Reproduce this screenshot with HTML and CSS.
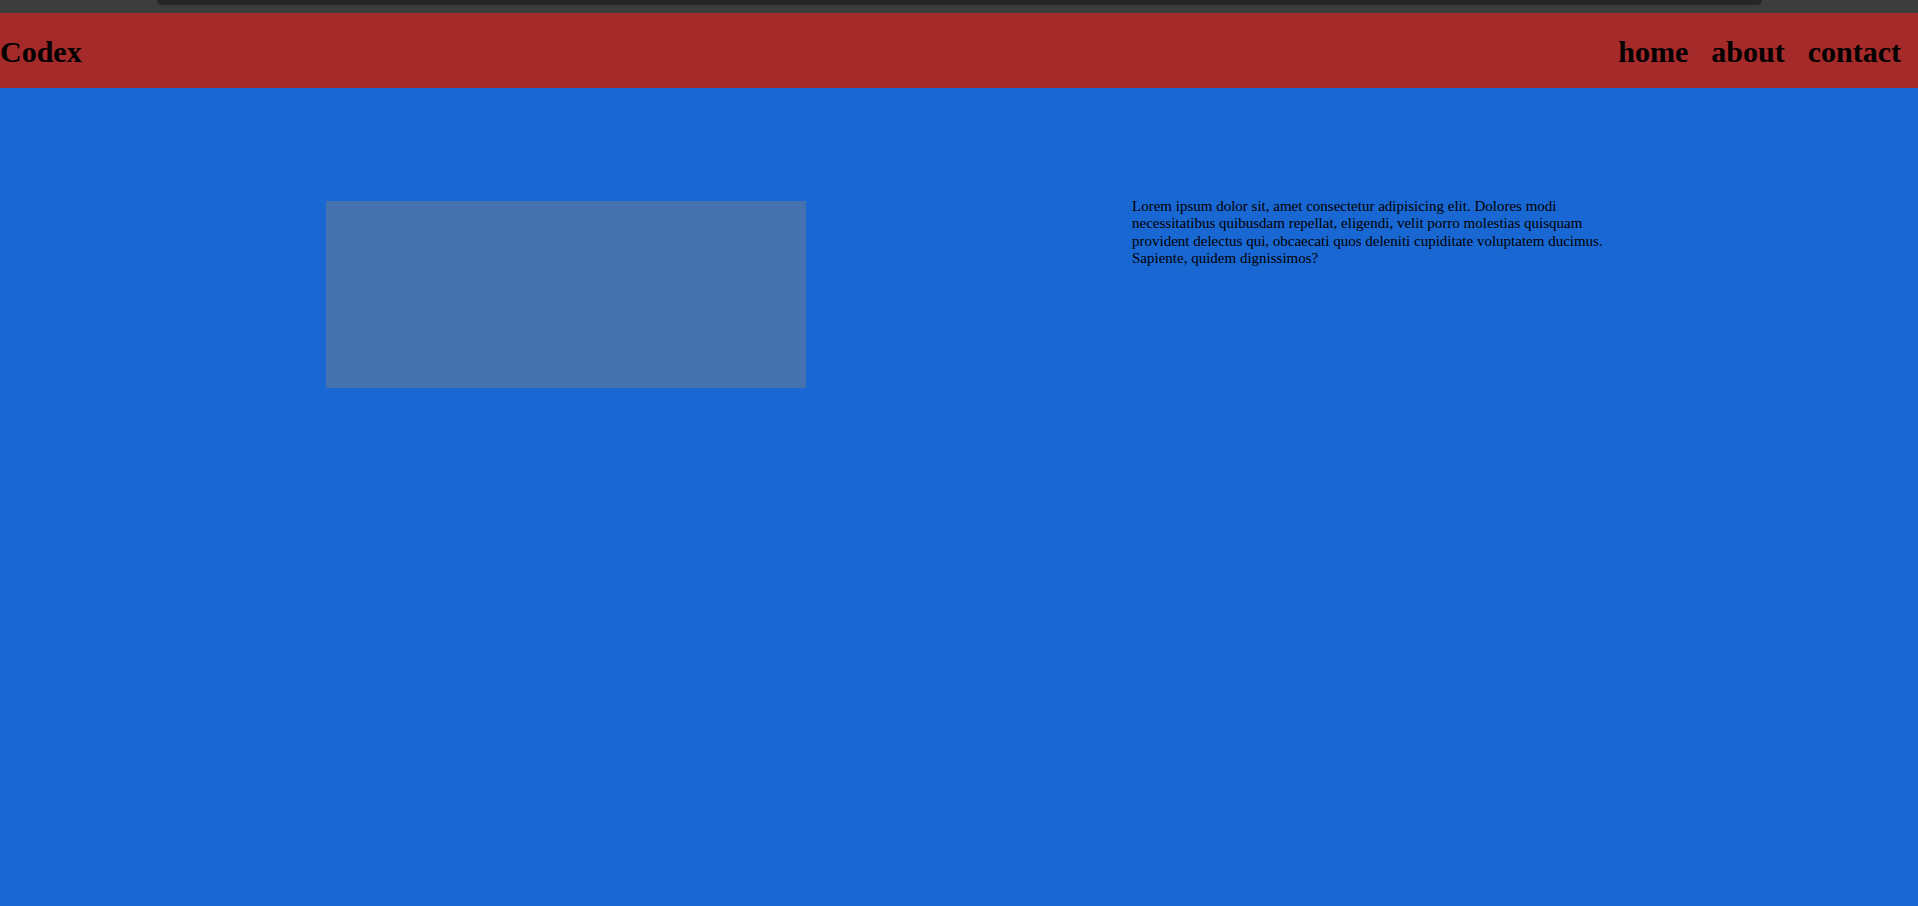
FILE: index.html
```html
<!DOCTYPE html>
<html>
<head>
<meta charset="utf-8">
<title>Codex</title>
<link rel="stylesheet" href="styles.css">
</head>
<body>
<div class="chrome"><div class="chrome-inner"></div></div>
<header class="header">
  <h1 class="logo">Codex</h1>
  <nav class="nav">
    <a class="nav-link" href="#">home</a>
    <a class="nav-link" href="#">about</a>
    <a class="nav-link" href="#">contact</a>
  </nav>
</header>
<main class="main">
  <div class="media"></div>
  <p class="text">Lorem ipsum dolor sit, amet consectetur adipisicing elit. Dolores modi necessitatibus quibusdam repellat, eligendi, velit porro molestias quisquam provident delectus qui, obcaecati quos deleniti cupiditate voluptatem ducimus. Sapiente, quidem dignissimos?</p>
</main>
</body>
</html>
```
FILE: styles.css
```css
html, body {
  margin: 0;
  padding: 0;
}
body {
  background: #1967d2;
  font-family: "Liberation Serif", "Times New Roman", serif;
  color: #000;
  min-height: 906px;
}
.chrome {
  height: 13px;
  background: #3c3c3c;
  display: flex;
  padding: 0 156px 0 157px;
}
.chrome-inner {
  flex: 1;
  height: 5px;
  background: #262626;
  border-radius: 0 0 8px 8px;
}
.header {
  height: 75px;
  background: #a52a2a;
  display: flex;
  align-items: center;
  justify-content: space-between;
}
.logo {
  margin: 0;
  font-size: 30px;
  font-weight: bold;
  padding-top: 2px;
}
.nav {
  display: flex;
  gap: 23px;
  padding-right: 17px;
  padding-top: 2px;
}
.nav-link {
  font-size: 30px;
  font-weight: bold;
  color: #000;
  text-decoration: none;
}
.main {
  display: flex;
  align-items: flex-start;
  padding: 113px 0 0 326px;
}
.media {
  width: 480px;
  height: 187px;
  background: #4571ae;
  flex: none;
}
.text {
  margin: -3px 0 0 326px;
  width: 480px;
  font-size: 15px;
  line-height: 17.4px;
}
```
